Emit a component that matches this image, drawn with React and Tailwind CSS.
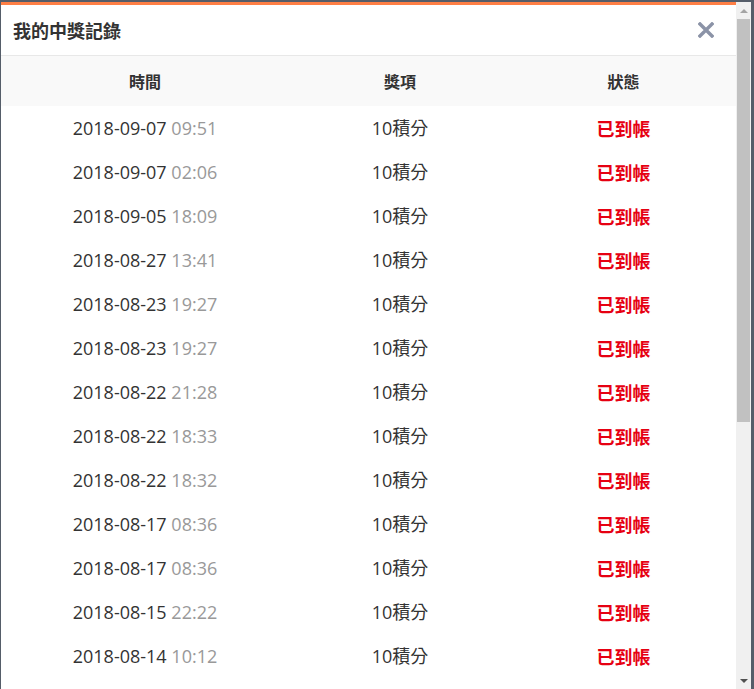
import React from 'react';

const ROWS = [
  ['2018-09-07', '09:51'],
  ['2018-09-07', '02:06'],
  ['2018-09-05', '18:09'],
  ['2018-08-27', '13:41'],
  ['2018-08-23', '19:27'],
  ['2018-08-23', '19:27'],
  ['2018-08-22', '21:28'],
  ['2018-08-22', '18:33'],
  ['2018-08-22', '18:32'],
  ['2018-08-17', '08:36'],
  ['2018-08-17', '08:36'],
  ['2018-08-15', '22:22'],
  ['2018-08-14', '10:12'],
];

const FONT = { fontFamily: '"Noto Sans CJK TC", "Noto Sans", sans-serif' };
const ROW_FONT = { fontFamily: '"Open Sans", "Noto Sans CJK TC", sans-serif' };

function Scrollbar() {
  return (
    <div className="w-[15px] flex flex-col bg-[#f0f0f0]">
      <div className="h-[17px] flex items-center justify-center">
        <div className="w-0 h-0 border-x-[4px] border-x-transparent border-b-[4px] border-b-[#a3a3a3]" />
      </div>
      <div className="mx-[1px] h-[403px] bg-[#c1c1c1]" />
      <div className="flex-1" />
      <div className="h-[17px] flex items-center justify-center">
        <div className="w-0 h-0 border-x-[4px] border-x-transparent border-t-[4px] border-t-[#505050]" />
      </div>
    </div>
  );
}

export default function App() {
  return (
    <div className="w-[754px] h-[689px] bg-[#555d69] pt-[2px] flex overflow-hidden" style={FONT}>
      <div className="w-[751px] flex pl-[1px]">
        {/* Modal body */}
        <div className="w-[735px] flex flex-col bg-white border-t-[3px] border-[#ff7f45] overflow-hidden">
          {/* Title */}
          <div className="h-[51px] shrink-0 flex items-center justify-between pl-[12px] pr-[22px] border-b border-[#e8e8e8]">
            <h2 className="text-[18px] font-bold text-[#333]">我的中獎記錄</h2>
            <svg width="16" height="16" viewBox="0 0 16 16">
              <path d="M2 2 L14 14 M14 2 L2 14" stroke="#8b93a7" strokeWidth="3.4" strokeLinecap="square" />
            </svg>
          </div>

          {/* Header row */}
          <div className="h-[50px] shrink-0 flex items-center bg-[#f9f9f9] text-[16px] font-bold text-[#333]">
            <div className="w-[288px] text-center">時間</div>
            <div className="w-[222px] text-center">獎項</div>
            <div className="flex-1 text-center">狀態</div>
          </div>

          {/* Rows */}
          {ROWS.map(([d, t], i) => (
            <div key={i} className="h-[44px] shrink-0 flex items-center text-[18px]" style={ROW_FONT}>
              <div className="w-[288px] text-center text-[#333]">
                {d} <span className="text-[#999]">{t}</span>
              </div>
              <div className="w-[222px] text-center text-[#333]">10積分</div>
              <div className="flex-1 text-center font-bold text-[#e60012]" style={FONT}>已到帳</div>
            </div>
          ))}
        </div>
        <Scrollbar />
      </div>
    </div>
  );
}
